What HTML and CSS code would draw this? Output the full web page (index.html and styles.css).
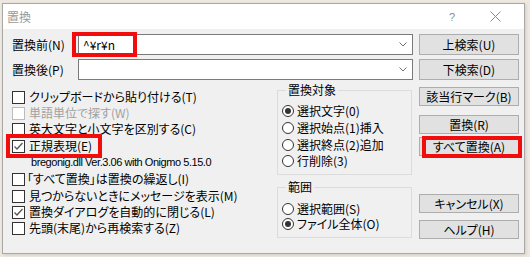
FILE: index.html
```html
<!DOCTYPE html>
<html lang="ja">
<head>
<meta charset="utf-8">
<title>置換</title>
<link rel="stylesheet" href="styles.css">
</head>
<body>
<div class="window">
  <div class="titlebar">
    <span class="title">置換</span>
    <span class="tb-help">?</span>
    <svg class="tb-close" width="11" height="11" viewBox="0 0 11 11"><path d="M0.5 0.5 L10.5 10.5 M10.5 0.5 L0.5 10.5" stroke="#8a8a8a" stroke-width="1" fill="none"/></svg>
  </div>
  <div class="client">
    <div class="toprow">
      <label class="flabel">置換前(N)</label>
      <div class="combo">
        <span class="combo-text">^¥r¥n</span>
        <svg class="chev" width="8" height="5" viewBox="0 0 8 5"><path d="M0.5 0.5 L4 4 L7.5 0.5" stroke="#707070" fill="none"/></svg>
        <span class="hl hl-find"></span>
      </div>
      <button class="btn">上検索(U)</button>
    </div>
    <div class="toprow">
      <label class="flabel">置換後(P)</label>
      <div class="combo">
        <span class="combo-text"></span>
        <svg class="chev" width="8" height="5" viewBox="0 0 8 5"><path d="M0.5 0.5 L4 4 L7.5 0.5" stroke="#707070" fill="none"/></svg>
      </div>
      <button class="btn">下検索(D)</button>
    </div>
    <div class="lower">
      <div class="checks">
        <div class="crow"><span class="cb"></span><span>クリップボードから貼り付ける(T)</span></div>
        <div class="crow disabled"><span class="cb"></span><span>単語単位で探す(W)</span></div>
        <div class="crow"><span class="cb"></span><span>英大文字と小文字を区別する(C)</span></div>
        <div class="crow mt1 regex"><span class="cb checked"><svg width="11" height="11" viewBox="0 0 11 11"><path d="M1.5 5.5 L4 8 L9.5 2" stroke="#555" stroke-width="1.3" fill="none"/></svg></span><span>正規表現(E)</span><span class="hl hl-regex"></span></div>
        <div class="crow info">bregonig.dll Ver.3.06 with Onigmo 5.15.0</div>
        <div class="crow mt1 brk"><span class="cb"></span><span>「すべて置換」は置換の繰返し(I)</span></div>
        <div class="crow mt1"><span class="cb"></span><span>見つからないときにメッセージを表示(M)</span></div>
        <div class="crow"><span class="cb checked"><svg width="11" height="11" viewBox="0 0 11 11"><path d="M1.5 5.5 L4 8 L9.5 2" stroke="#555" stroke-width="1.3" fill="none"/></svg></span><span>置換ダイアログを自動的に閉じる(L)</span></div>
        <div class="crow"><span class="cb"></span><span>先頭(末尾)から再検索する(Z)</span></div>
      </div>
      <div class="groups">
        <fieldset class="group g1">
          <legend>置換対象</legend>
          <div class="rrow"><span class="rb on"></span><span>選択文字(0)</span></div>
          <div class="rrow r17"><span class="rb"></span><span>選択始点(1)挿入</span></div>
          <div class="rrow r17"><span class="rb"></span><span>選択終点(2)追加</span></div>
          <div class="rrow"><span class="rb"></span><span>行削除(3)</span></div>
        </fieldset>
        <fieldset class="group g2">
          <legend>範囲</legend>
          <div class="rrow r15"><span class="rb"></span><span>選択範囲(S)</span></div>
          <div class="rrow"><span class="rb on"></span><span>ファイル全体(O)</span></div>
        </fieldset>
      </div>
      <div class="buttons">
        <button class="btn b-mark">該当行マーク(B)</button>
        <button class="btn b-rep">置換(R)</button>
        <button class="btn b-all">すべて置換(A)<span class="hl hl-all"></span></button>
        <button class="btn b-cancel">キャンセル(X)</button>
        <button class="btn b-help">ヘルプ(H)</button>
      </div>
    </div>
  </div>
</div>
</body>
</html>
```

FILE: styles.css
```css
* { box-sizing: border-box; }
html, body { margin: 0; padding: 0; }
body {
  width: 530px;
  height: 257px;
  background: #ede9e1;
  font-family: "Noto Sans CJK JP", "Noto Sans", sans-serif;
  font-size: 12px;
  font-feature-settings: "palt";
  color: #000;
  overflow: hidden;
}
.window {
  margin: 3px 0 0 2px;
  width: 523px;
  height: 251px;
  border: 1px solid #a8a8a8;
  background: #f0f0f0;
  box-shadow: 1px 1px 3px rgba(0,0,0,0.12);
  display: flex;
  flex-direction: column;
}
.titlebar {
  height: 25px;
  background: #fff;
  display: flex;
  align-items: center;
  padding-left: 4px;
}
.title {
  color: #9a9a9a;
  font-size: 12px;
  line-height: 14px;
  flex: 1;
}
.tb-help {
  color: #8a8a8a;
  font-family: "Liberation Sans", sans-serif;
  font-size: 11px;
  margin-right: 35px;
}
.tb-close { margin-right: 23px; }
.client {
  padding: 5px 5px 0 9px;
}
.toprow {
  display: flex;
  align-items: center;
  height: 21px;
  margin-bottom: 4px;
}
.flabel {
  width: 66px;
  line-height: 14px;
}
.combo {
  position: relative;
  width: 335px;
  height: 21px;
  background: #fff;
  border: 1px solid #7a7a7a;
  display: flex;
  align-items: center;
  padding-left: 4px;
  margin-right: 6px;
}
.combo-text {
  flex: 1;
  font-size: 12px;
  line-height: 14px;
}
.chev { margin-right: 5px; }
.btn {
  position: relative;
  width: 100px;
  height: 21px;
  background: #e1e1e1;
  border: 1px solid #adadad;
  font: inherit;
  font-size: 12px;
  line-height: 14px;
  color: #000;
  padding: 0;
  margin: 0;
}
.hl {
  position: absolute;
  border: 4px solid #f20d0d;
  pointer-events: none;
}
.hl-find { left: -7px; top: -3px; width: 65px; height: 25px; }
.hl-regex { left: -6px; top: -4px; width: 96px; height: 24px; }
.hl-all { left: 2px; top: -2px; width: 100px; height: 22px; }
.lower {
  display: grid;
  grid-template-columns: 265px 142px 100px;
  margin-top: -1px;
}
.checks { padding-top: 6px; }
.crow {
  position: relative;
  display: flex;
  align-items: center;
  height: 16px;
  line-height: 14px;
  white-space: nowrap;
}
.crow.mt1 { margin-top: 1px; }
.crow.brk .cb { margin-right: 2px; }
.crow.info {
  padding-left: 19px;
  font-family: "Liberation Sans", sans-serif;
  font-size: 11px;
  letter-spacing: -0.45px;
  color: #000;
}
.cb {
  width: 13px;
  height: 13px;
  border: 1px solid #333;
  background: #fff;
  margin-right: 4px;
  flex: none;
  display: flex;
  align-items: center;
  justify-content: center;
}
.crow.disabled { color: #a0a0a0; }
.crow.disabled .cb { border-color: #bcbcbc; }
.groups { width: 135px; }
.group {
  margin: 0;
  padding: 0 4px;
  border: 1px solid #dcdcdc;
  min-width: 0;
}
.group legend {
  padding: 0 2px;
  margin-left: 4px;
  line-height: 14px;
}
.g1 { height: 92px; padding-top: 6px; }
.g2 { height: 58px; padding-top: 7px; margin-top: 5px; }
.rrow {
  display: flex;
  align-items: center;
  height: 16px;
  line-height: 14px;
  white-space: nowrap;
}
.rrow.r17 { height: 17px; }
.rrow.r15 { height: 15px; }
.rb {
  width: 12px;
  height: 12px;
  border: 1px solid #333;
  border-radius: 50%;
  background: #fff;
  margin-right: 3px;
  flex: none;
  display: flex;
  align-items: center;
  justify-content: center;
}
.rb.on::after {
  content: "";
  width: 6px;
  height: 6px;
  border-radius: 50%;
  background: #333;
}
.buttons {
  display: flex;
  flex-direction: column;
}
.buttons .btn { height: 19px; }
.b-mark { margin-top: 4px; }
.b-rep { margin-top: 9px; }
.b-all { margin-top: 3px; }
.b-cancel { margin-top: 38px; }
.b-help { margin-top: 7px; }
```
